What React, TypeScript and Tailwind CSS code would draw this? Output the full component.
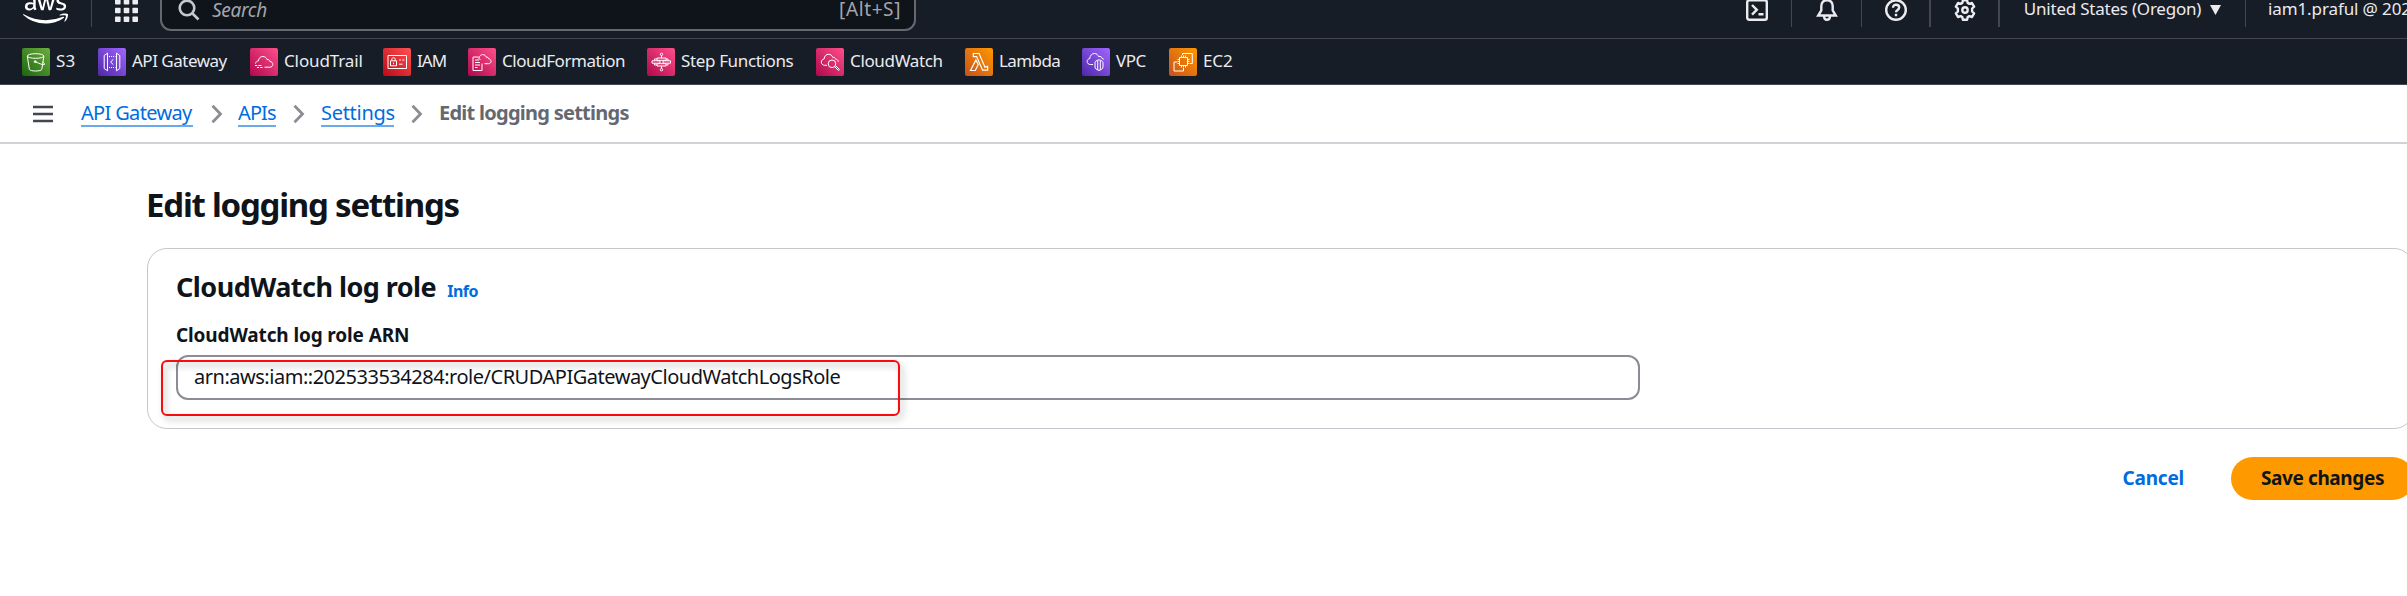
import type { ReactNode } from "react";
import { FaAws } from "react-icons/fa";

type Service = { name: string; cell: string; text: string; from: string; to: string; glyph: ReactNode };

const PINK = ["#b0084d", "#ff4f8b"];
const PURPLE = ["#4d27a8", "#a166ff"];
const ORANGE = ["#c8511b", "#ff9900"];

const services: Service[] = [
  {
    name: "S3", cell: "w-[76px]", text: "tracking-[0.17px]", from: "#1b660f", to: "#6cae3e",
    glyph: (
      <>
        <ellipse cx="13.6" cy="8" rx="8.3" ry="2.3" />
        <path d="M5.3 8.2 7.4 21.4c.4 1 3 1.600 6.200 1.600s5.800-.6 6.200-1.600L21.900 8.200" />
        <path d="M13.300 13.700c4 2 8 3.400 9.200 2.800.6-.5-.3-1.500-2-2.600" />
        <circle cx="13.200" cy="13.600" r=".9" fill="#fff" />
      </>
    ),
  },
  {
    name: "API Gateway", cell: "w-[152px]", text: "tracking-[-0.5px]", from: PURPLE[0], to: PURPLE[1],
    glyph: (
      <>
        <path d="M9.500 5.200 6.200 7.500v13l3.300 2.300zM18.500 5.200l3.300 2.300v13l-3.300 2.300z" />
        <path d="M11 8.500h6.500M11 19.500h6.500" strokeDasharray="1 1" />
        <path d="m15.300 11.400-2.700 2.600 2.700 2.600" />
      </>
    ),
  },
  {
    name: "CloudTrail", cell: "w-[133px]", text: "tracking-[-0.12px]", from: PINK[0], to: PINK[1],
    glyph: (
      <>
        <path d="M5.500 15.500c.4-1.800 1.600-2.500 3-2.700.2-2.800 2-4.300 4.300-4.300 2.200 0 3.700 1.200 4.300 3.200 1.300-.5 2.600.2 2.800 1.700 1.800.3 2.900 1.400 2.900 3s-1.300 2.800-3 2.800H14.500" />
        <path d="M5 17.500h2.200M8.300 17.500h3.200M7 19.500h2M10.300 19.500h2.200" />
      </>
    ),
  },
  {
    name: "IAM", cell: "w-[85px]", text: "tracking-[-0.9px]", from: "#bd0816", to: "#ff5252",
    glyph: (
      <path d="M5 7.500h18.500v13H5zM7.500 12.800h6v5h-6zM8.800 12.600V11.300c0-2.100 3.400-2.100 3.400 0v1.300M10.500 14.700v1.500M16 12h2M19.300 12h2M16 16.200h3.500" />
    ),
  },
  {
    name: "CloudFormation", cell: "w-[179px]", text: "tracking-[-0.44px]", from: PINK[0], to: PINK[1],
    glyph: (
      <>
        <path d="M10.500 9H5v13.500h9v-7M7 12h4M7 14.500h5M7 17h5M7 19.500h2.500" />
        <path d="M11 10c.4-2 1.800-3.400 3.700-3.400 1.800 0 3 1 3.500 2.600 1.300-.3 2.300.3 2.500 1.600 1.500.2 2.300 1.200 2.300 2.500 0 1.400-1 2.400-2.500 2.400h-4M10 9.500l2.500 2.500" />
      </>
    ),
  },
  {
    name: "Step Functions", cell: "w-[169px]", text: "tracking-[-0.36px]", from: PINK[0], to: PINK[1],
    glyph: (
      <>
        <circle cx="14.500" cy="6.300" r="1.200" />
        <circle cx="14.500" cy="21.700" r="1.200" />
        <path d="M14.500 7.500V10M14.500 18v2.500M10 10h9v2.300h-9zM10 15.700h9V18h-9zM5 12.800h8v2.400H5zM16 12.800h7.500v2.400H16zM7.500 12.800V11H10M7.500 15.200V17H10M21 12.800V11h-2M21 15.200V17h-2" />
      </>
    ),
  },
  {
    name: "CloudWatch", cell: "w-[149px]", text: "tracking-[-0.35px]", from: PINK[0], to: PINK[1],
    glyph: (
      <>
        <path d="M11 17.300H8.800c-2 0-3.500-1.300-3.500-3.200 0-1.800 1.200-2.900 2.800-3.100C8.300 8 10.200 6.300 12.500 6.300c2.200 0 3.700 1.200 4.300 3.200 1.400-.4 2.500.3 2.700 1.600 1.700.3 2.700 1.200 2.900 2.700" />
        <circle cx="16" cy="15.800" r="3.800" />
        <path d="m18.700 18.600 3.300 3.500c.9.700 1.700-.3 1-1.100l-3.200-3.200" />
      </>
    ),
  },
  {
    name: "Lambda", cell: "w-[117px]", text: "tracking-[-0.6px]", from: ORANGE[0], to: ORANGE[1],
    glyph: <path strokeWidth="1.2" d="M8.300 5.500h5.800l5.900 13.700 2.600-.8v3.800h-5L11.600 8.600H8.300zM10.900 12l2.300 4.500-2.900 6H5.500z" />,
  },
  {
    name: "VPC", cell: "w-[87px]", text: "tracking-[-0.49px]", from: PURPLE[0], to: PURPLE[1],
    glyph: (
      <>
        <path d="M11 16.500H8.500c-2 0-3.300-1.200-3.300-3 0-1.600 1-2.700 2.600-3C8 7.500 9.900 5.500 12.300 5.500c2.200 0 3.600 1.100 4.300 3.100 1.900-.6 3.400.3 3.500 1.900.9.200 1.500.5 2 1" />
        <path d="M17 11.800c2.600.6 4 1.700 4 2.900v4.300c0 1.500-1.600 2.800-4 3.400-2.400-.6-4-1.900-4-3.400v-4.300c0-1.200 1.400-2.300 4-2.900zM15.700 12.500v9.500M18.300 12.500v9.500" />
      </>
    ),
  },
  {
    name: "EC2", cell: "w-[87px]", text: "tracking-[-0.1px]", from: ORANGE[0], to: ORANGE[1],
    glyph: (
      <>
        <path d="M10.500 9.500h8v8h-8zM12.500 7.500v2M14.500 7.500v2M16.500 7.500v2M12.500 17.500v2M14.500 17.500v2M16.500 17.500v2M8.500 11.500h2M8.500 13.500h2M8.500 15.500h2M18.500 11.500h2M18.500 13.500h2M18.500 15.500h2" />
        <path d="M13.500 7V5.500h9.800V15.500H21M8 14H5v9h9.500v-3" />
      </>
    ),
  },
];

function ServiceLink({ s }: { s: Service }) {
  const id = `bg-${s.name.replace(" ", "-")}`;
  return (
    <li className={`flex items-center gap-[6px] ${s.cell}`}>
      <svg className="h-7 w-7 shrink-0" viewBox="0 0 28 28" fill="none" stroke="#fff" strokeWidth="1">
        <defs>
          <linearGradient id={id} x1="0" y1="1" x2="1" y2="0">
            <stop offset="0" stopColor={s.from} />
            <stop offset="1" stopColor={s.to} />
          </linearGradient>
        </defs>
        <rect width="28" height="28" rx="2" fill={`url(#${id})`} stroke="none" />
        {s.glyph}
      </svg>
      <span className={`whitespace-nowrap pb-[2px] text-[17px] leading-6 ${s.text}`}>{s.name}</span>
    </li>
  );
}

function Cell({ className, children }: { className: string; children: ReactNode }) {
  return <div className={`flex h-[34px] shrink-0 items-center justify-center border-[#424650] ${className}`}>{children}</div>;
}

const outline = { viewBox: "0 0 22 22", fill: "none", stroke: "currentColor", strokeWidth: 2.4 };

function Chevron() {
  return (
    <svg className="h-5 w-3" viewBox="0 0 12 20" fill="none" stroke="#8c8c94" strokeWidth="2.8">
      <path d="m1.500 1.800 8 8.200-8 8.200" />
    </svg>
  );
}

function Crumb({ className, children }: { className: string; children: ReactNode }) {
  return (
    <a className={`block shrink-0 whitespace-nowrap border-b-2 border-[#6aa9ec] text-xl leading-[25px] text-[#006ce0] ${className}`}>
      {children}
    </a>
  );
}

export default function App() {
  return (
    <div className="flex h-[596px] w-[2407px] flex-col overflow-hidden bg-white font-['Noto_Sans','Open_Sans',sans-serif] text-[#0f141a]">
      <header className="shrink-0 bg-[#161d26] text-[#ebebf0]">
        <nav className="-mt-[18px] flex h-[57px] items-center border-b border-[#424650]">
          <Cell className="w-[92px] border-r">
            <FaAws className="h-9 w-[45px] text-white" />
          </Cell>
          <div className="flex w-[68px] shrink-0 justify-center">
            <svg className="h-[23px] w-[23px]" viewBox="0 0 23 23" fill="currentColor">
              {[0, 8.7, 17.4].map((y) => [0, 8.7, 17.4].map((x) => <rect key={`${x}-${y}`} x={x} y={y} width="5.600" height="5.600" rx=".8" />))}
            </svg>
          </div>
          <div className="flex h-[42px] w-[756px] shrink-0 items-center rounded-[11px] border-2 border-[#656871] bg-[#0f141a] pr-[13px] pl-4">
            <svg className="h-[22px] w-[22px] text-[#c6c6cd]" viewBox="0 0 22 22" fill="none" stroke="currentColor" strokeWidth="2.600">
              <circle cx="9" cy="9" r="7.300" />
              <path d="m14 14 6.500 6.500" />
            </svg>
            <span className="ml-3 text-[19px] italic tracking-[-0.3px] text-[#a4a4ad]">Search</span>
            <span className="ml-auto pb-[2px] text-[19px] tracking-[0.6px] text-[#a4a4ad]">[Alt+S]</span>
          </div>
          <Cell className="ml-[806px] w-[70px] border-r">
            <svg className="h-[22px] w-[22px]" {...outline}>
              <rect x="1.200" y="1.200" width="19.600" height="19.600" rx="2" />
              <path d="m6 6 4.800 4.800L6 15.600M12.500 15.300h5" />
            </svg>
          </Cell>
          <Cell className="w-[70px] border-r">
            <svg className="h-[22px] w-[22px]" {...outline}>
              <path d="M11 1.200c-3.600 0-5.700 2.500-5.700 6v4.300L2.200 16.500h17.600l-3.100-5V7.200c0-3.500-2.100-6-5.700-6zM8 17c0 5 6 5 6 0" />
            </svg>
          </Cell>
          <Cell className="w-[69px] border-r-2">
            <svg className="h-[22px] w-[22px]" {...outline}>
              <circle cx="11" cy="11" r="9.800" />
              <path d="M8 8.800C8 4.500 14.200 5 14.200 8.600c0 2.400-3.200 2.200-3.200 4.700M11 14.800v2.400" />
            </svg>
          </Cell>
          <Cell className="w-[69px] border-r-2">
            <svg className="h-[22px] w-[22px]" {...outline}>
              <path strokeLinejoin="round" d="M8.900 1.200h4.200l.6 2.700 1.700 1 2.600-.9 2.100 3.600-2 1.900v3l2 1.900-2.100 3.600-2.600-.9-1.700 1-.6 2.700H8.900l-.6-2.700-1.700-1-2.600.9-2.100-3.600 2-1.900v-3l-2-1.900L4 4l2.600.9 1.700-1z" />
              <circle cx="11" cy="11" r="2.700" />
            </svg>
          </Cell>
          <Cell className="w-[246px] border-r">
            <span className="whitespace-nowrap pb-[2px] text-[17px] tracking-[-0.22px]">United States (Oregon)</span>
            <svg className="ml-[9px] h-[10px] w-[11px]" viewBox="0 0 11 10" fill="currentColor">
              <path d="M0 0h11L5.500 10z" />
            </svg>
          </Cell>
          <span className="ml-[22px] shrink-0 whitespace-nowrap pb-[2px] text-[17px] tracking-[-0.11px]">iam1.praful @ 202</span>
        </nav>
        <ul className="flex h-[46px] items-center border-b border-[#424650] pl-[22px]">
          {services.map((s) => (
            <ServiceLink key={s.name} s={s} />
          ))}
        </ul>
      </header>

      <div className="flex h-[59px] shrink-0 items-center border-b-2 border-[#d1d3d8] pl-[33px]">
        <svg className="mr-7 h-[18px] w-5" viewBox="0 0 20 18" stroke="#424650" strokeWidth="2.500">
          <path d="M0 2h20M0 9h20M0 16h20" />
        </svg>
        <Crumb className="w-[112px] tracking-[-0.66px]">API Gateway</Crumb>
        <div className="flex w-[45px] justify-center pl-0.5"><Chevron /></div>
        <Crumb className="w-[38px] tracking-[-0.9px]">APIs</Crumb>
        <div className="flex w-[45px] justify-center"><Chevron /></div>
        <Crumb className="w-[73px] tracking-[-0.29px]">Settings</Crumb>
        <div className="flex w-[45px] justify-center"><Chevron /></div>
        <span className="pb-px text-xl font-bold tracking-[-0.74px] whitespace-nowrap text-[#656871]">Edit logging settings</span>
      </div>

      <main className="flex w-[2414px] shrink-0 flex-col pt-10 pl-[147px]">
        <h1 className="-ml-px text-[33px] leading-[42px] font-bold tracking-[-1.23px]">Edit logging settings</h1>
        <section className="mt-[22px] h-[181px] rounded-[20px] border border-[#c6c6cd] pt-5 pl-7">
          <div className="flex items-baseline gap-[11px] leading-9">
            <h2 className="text-[27px] font-bold tracking-[-0.54px]">CloudWatch log role</h2>
            <a className="text-base font-bold tracking-[-0.5px] text-[#006ce0]">Info</a>
          </div>
          <label className="mt-[18px] block text-[19px] leading-6 font-bold tracking-[-0.13px]">CloudWatch log role ARN</label>
          <div className="relative mt-2 flex h-[45px] w-[1464px] items-center rounded-xl border-2 border-[#8c8c94] pl-4">
            <span className="pb-[2px] text-xl leading-6 tracking-[-0.48px]">arn:aws:iam::202533534284:role/CRUDAPIGatewayCloudWatchLogsRole</span>
            <div className="absolute top-[3px] -left-[17px] h-[56px] w-[739px] rounded-md border-2 border-[#fa0a0a] drop-shadow-[3px_4px_3px_rgba(0,0,0,0.3)]" />
          </div>
        </section>
        <div className="mt-7 flex items-center justify-end text-[19px] leading-6 font-bold">
          <button className="mr-[47px] pb-px tracking-[-0.22px] text-[#006ce0]">Cancel</button>
          <button className="h-[43px] w-[183px] rounded-full bg-[#ff9900] pb-px tracking-[-0.38px]">Save changes</button>
        </div>
      </main>
    </div>
  );
}
